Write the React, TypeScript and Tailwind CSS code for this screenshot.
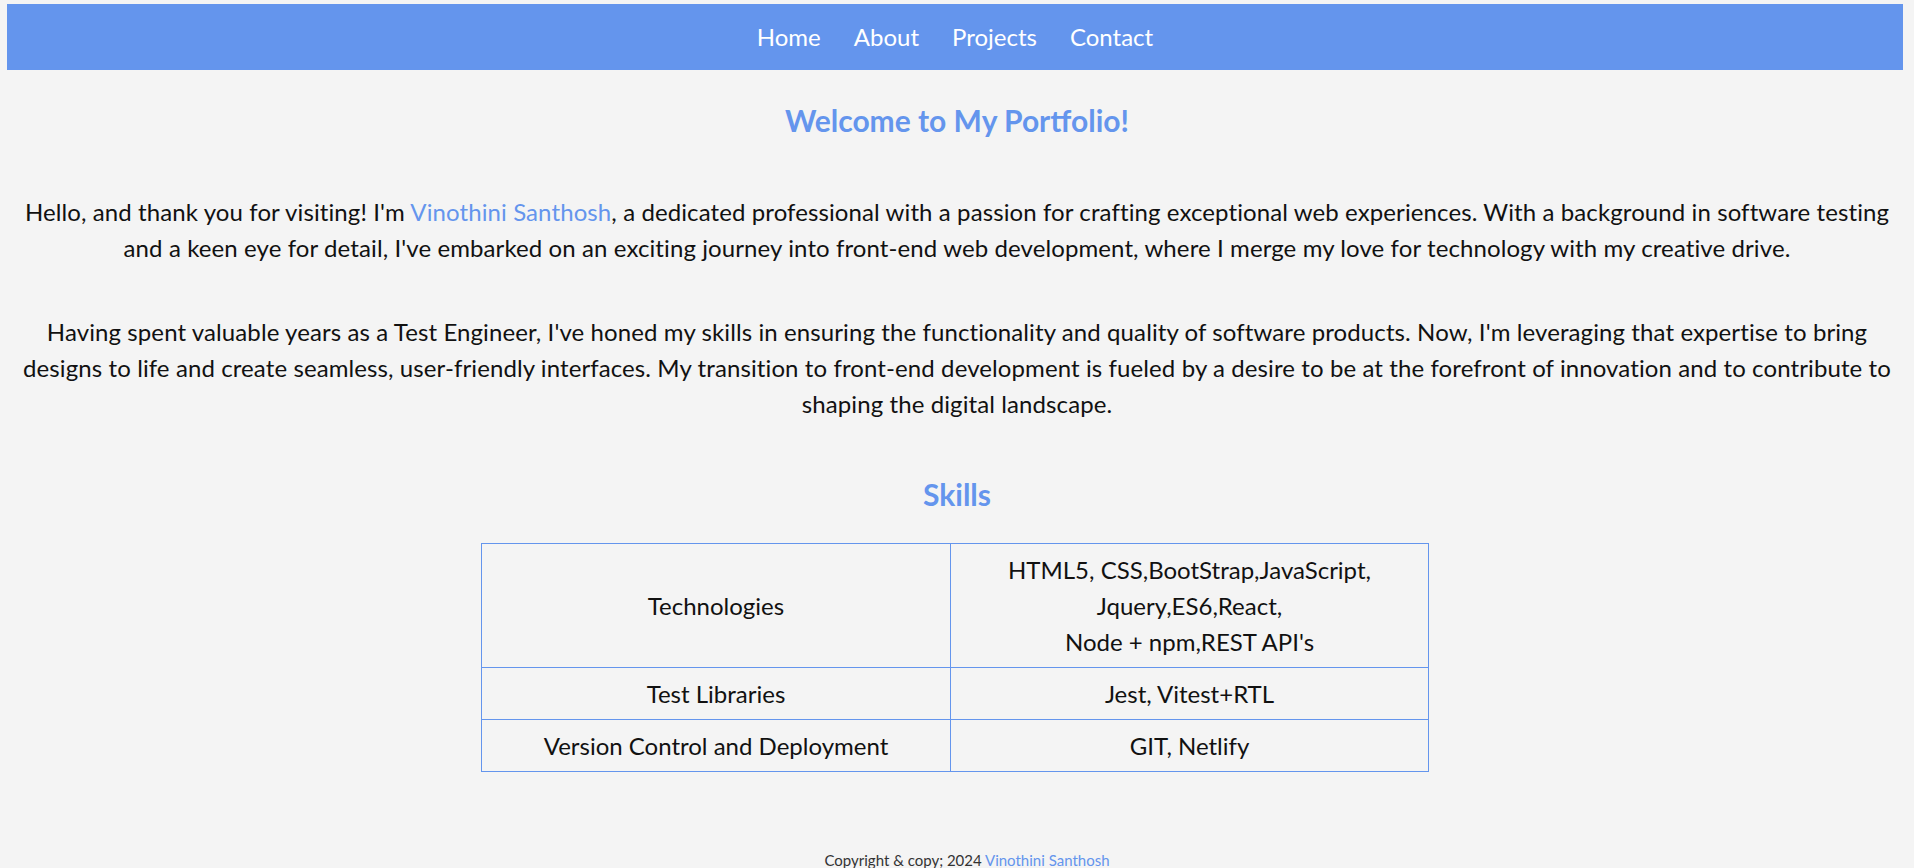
const font = "font-['Lato','Noto_Sans',sans-serif]";

const links = ["Home", "About", "Projects", "Contact"];

const skills = [
  {
    name: "Technologies",
    value: ["HTML5, CSS,BootStrap,JavaScript,", "Jquery,ES6,React,", "Node + npm,REST API's"],
    h: "h-[124px]",
  },
  { name: "Test Libraries", value: ["Jest, Vitest+RTL"], h: "h-[52px]" },
  { name: "Version Control and Deployment", value: ["GIT, Netlify"], h: "h-[52px]" },
];

export default function App() {
  return (
    <div className={`min-h-screen bg-[#f4f4f4] pt-[4px] text-[#111] ${font}`}>
      {/* nav bar */}
      <nav className="ml-[7px] mr-[11px] flex h-[66px] items-center justify-center gap-[33px] bg-[#6495ed]">
        {links.map((l) => (
          <a key={l} href="#" className="text-[24px] text-white">
            {l}
          </a>
        ))}
      </nav>

      <main className="px-[16px] text-center">
        <h1 className="mt-[32px] text-[30px] font-bold leading-[36px] text-[#6495ed]">
          Welcome to My Portfolio!
        </h1>

        <p className="mt-[56px] text-[24px] leading-[36px] tracking-[0.1px]">
          Hello, and thank you for visiting! I'm{" "}
          <span className="text-[#6495ed]">Vinothini Santhosh</span>, a dedicated professional with a
          passion for crafting exceptional web experiences. With a background in software testing and a
          keen eye for detail, I've embarked on an exciting journey into front-end web development, where
          I merge my love for technology with my creative drive.
        </p>

        <p className="mt-[48px] text-[24px] leading-[36px] tracking-[0.1px]">
          Having spent valuable years as a Test Engineer, I've honed my skills in ensuring the
          functionality and quality of software products. Now, I'm leveraging that expertise to bring
          designs to life and create seamless, user-friendly interfaces. My transition to front-end
          development is fueled by a desire to be at the forefront of innovation and to contribute to
          shaping the digital landscape.
        </p>

        <h2 className="mt-[54px] text-[30px] font-bold leading-[36px] text-[#6495ed]">Skills</h2>

        <table className="mx-auto mt-[31px] w-[948px] -translate-x-[2px] border-collapse text-[24px]">
          <tbody>
            {skills.map((s) => (
              <tr key={s.name} className={s.h}>
                <td className="w-[469px] border border-[#6495ed] leading-[36px]">{s.name}</td>
                <td className="border border-[#6495ed] leading-[36px]">
                  {s.value.map((v) => (
                    <div key={v}>{v}</div>
                  ))}
                </td>
              </tr>
            ))}
          </tbody>
        </table>

        <footer className="mt-[78px] pl-[20px] text-[15px] leading-[20px] text-[#333]">
          Copyright &amp; copy; 2024 <span className="text-[#6495ed]">Vinothini Santhosh</span>
        </footer>
      </main>
    </div>
  );
}
